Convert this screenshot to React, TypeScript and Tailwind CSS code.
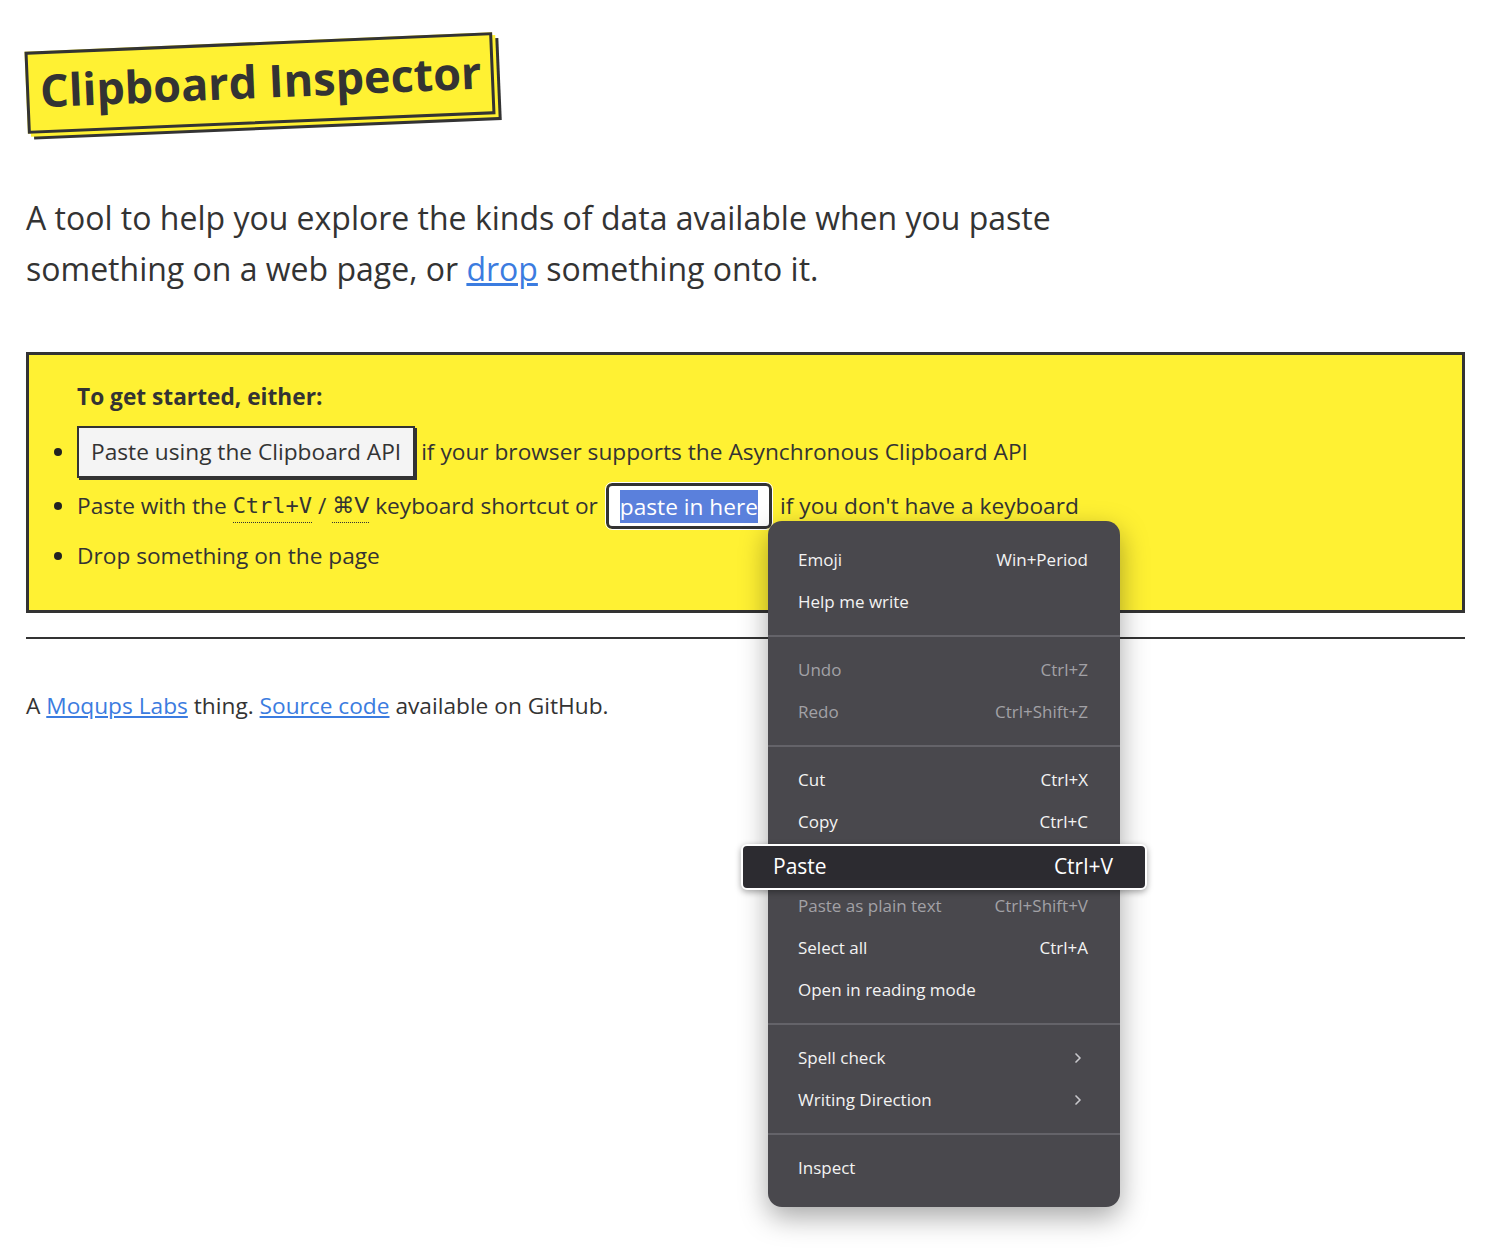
import { ChevronRight } from "lucide-react";

const menu = [
  [
    { label: "Emoji", key: "Win+Period" },
    { label: "Help me write" },
  ],
  [
    { label: "Undo", key: "Ctrl+Z", off: true },
    { label: "Redo", key: "Ctrl+Shift+Z", off: true },
  ],
  [
    { label: "Cut", key: "Ctrl+X" },
    { label: "Copy", key: "Ctrl+C" },
    { label: "Paste", key: "Ctrl+V", active: true },
    { label: "Paste as plain text", key: "Ctrl+Shift+V", off: true },
    { label: "Select all", key: "Ctrl+A" },
    { label: "Open in reading mode" },
  ],
  [
    { label: "Spell check", sub: true },
    { label: "Writing Direction", sub: true },
  ],
  [{ label: "Inspect" }],
];

type Item = { label: string; key?: string; off?: boolean; active?: boolean; sub?: boolean };

const MenuRow = ({ item }: { item: Item }) => {
  if (item.active) {
    return (
      <div className="relative top-[3px] -mx-[27px] -my-[2px] flex h-[46px] items-center justify-between rounded-md border-2 border-white bg-[#2c2b30] pl-[30px] pr-[32px] text-[21px] text-white shadow-[0_2px_6px_rgba(0,0,0,0.35)]">
        <span>{item.label}</span>
        <span>{item.key}</span>
      </div>
    );
  }
  return (
    <div
      className={`flex h-[42px] items-center justify-between pl-[30px] pr-[32px] ${
        item.off ? "text-[#a2a1a6]" : "text-[#f3f3f3]"
      }`}
    >
      <span>{item.label}</span>
      {item.key && <span>{item.key}</span>}
      {item.sub && <ChevronRight size={16} strokeWidth={2.5} className="mr-[2px] text-[#c8c8cc]" />}
    </div>
  );
};

const ContextMenu = () => (
  <div className="absolute left-[768px] top-[521px] w-[352px] rounded-[14px] bg-[#49484d] py-[18px] text-[17px] shadow-[0_10px_28px_rgba(0,0,0,0.35)]">
    {menu.map((group, gi) => (
      <div key={gi}>
        {gi > 0 && <div className="my-[12px] h-[2px] bg-[#646369]" />}
        {group.map((item, i) => (
          <MenuRow key={i} item={item as Item} />
        ))}
      </div>
    ))}
  </div>
);

export default function App() {
  return (
    <div className="relative min-h-[1253px] bg-white pl-[26px] pr-[43px] pt-[42px] text-[#333] [font-family:'Open_Sans',sans-serif]">
      <div className="inline-block -rotate-[2.4deg] border-[3px] border-[#333] bg-[#fff133] pb-[8px] pl-[11px] pr-[9px] pt-[4px] shadow-[3px_3px_0_#fff133,6px_6px_0_#333]">
        <h1 className="text-[45px] font-bold leading-[64px]">Clipboard Inspector</h1>
      </div>

      <p className="mt-[68px] max-w-[1080px] text-[32px] leading-[51px]">
        A tool to help you explore the kinds of data available when you paste something on a web page, or{" "}
        <a href="#" className="text-[#3b7ce0] underline">
          drop
        </a>{" "}
        something onto it.
      </p>

      <div className="mt-[58px] border-[3px] border-[#333] bg-[#fff133] pb-[37px] pl-[48px] pr-4 pt-[25px] text-[22.7px]">
        <p className="font-bold">To get started, either:</p>
        <ul className="mt-[12px] list-disc pl-0 marker:text-[#222]">
          <li className="h-[56px]">
            <span className="inline-flex items-center gap-[6px]">
              <button className="h-[52px] border-2 border-[#333] bg-[#f4f4f4] px-[12px] shadow-[2px_2px_0_#333]">
                Paste using the Clipboard API
              </button>
              <span>if your browser supports the Asynchronous Clipboard API</span>
            </span>
          </li>
          <li className="pt-[1px]">
            <span className="inline-flex items-center">
              Paste with the&nbsp;
              <abbr className="border-b border-dotted border-[#333] text-[22px] no-underline [font-family:'DejaVu_Sans_Mono',monospace]">
                Ctrl+V
              </abbr>
              &nbsp;/&nbsp;
              <abbr className="border-b border-dotted border-[#333] text-[22px] no-underline [font-family:'DejaVu_Sans',sans-serif]">
                ⌘V
              </abbr>
              &nbsp;keyboard shortcut or
              <span className="ml-[8px] mr-[8px] inline-flex h-[46px] items-center rounded-[6px] border-[3px] border-[#333] bg-white px-[11px] outline outline-1 outline-white">
                <span className="bg-[#5a80dc] leading-[33px] text-white">paste in here</span>
              </span>
              if you don't have a keyboard
            </span>
          </li>
          <li className="mt-[10px]">Drop something on the page</li>
        </ul>
      </div>

      <hr className="mt-[24px] border-t-2 border-[#333]" />

      <p className="mt-[50px] text-[22.7px]">
        A{" "}
        <a href="#" className="text-[#3b7ce0] underline">
          Moqups Labs
        </a>{" "}
        thing.{" "}
        <a href="#" className="text-[#3b7ce0] underline">
          Source code
        </a>{" "}
        available on GitHub.
      </p>

      <ContextMenu />
    </div>
  );
}
